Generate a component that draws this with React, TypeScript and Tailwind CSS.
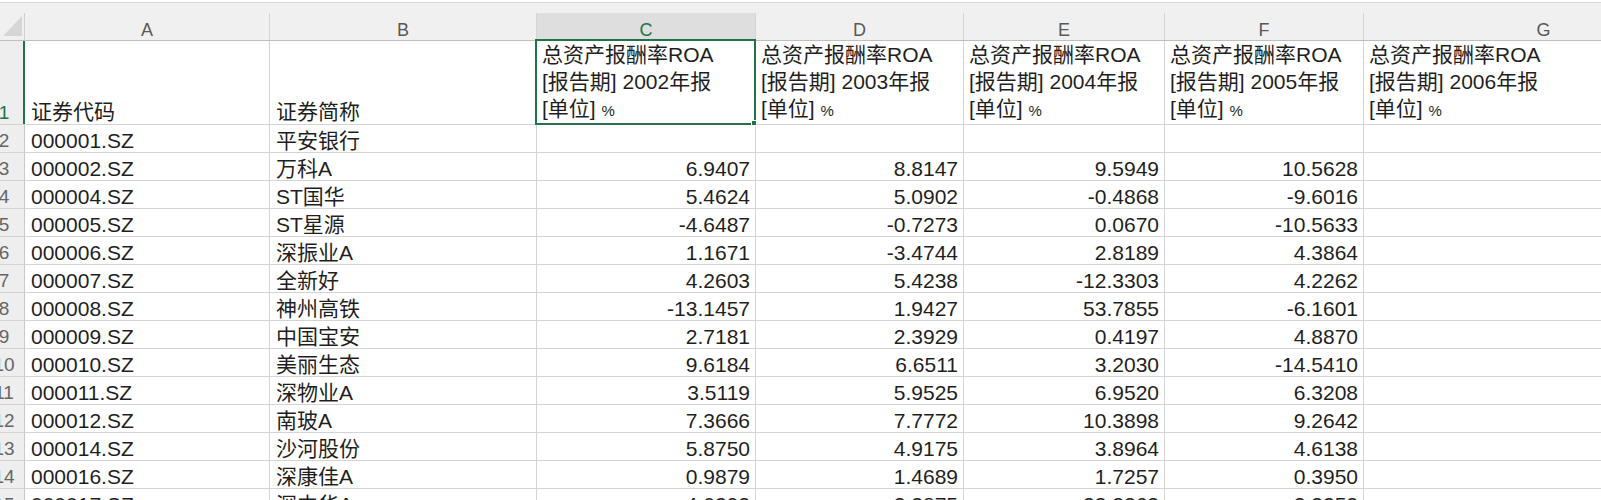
import React from "react";

const cols = [
  { key: "A", w: "w-[245px]" },
  { key: "B", w: "w-[267px]" },
  { key: "C", w: "w-[219px]" },
  { key: "D", w: "w-[208px]" },
  { key: "E", w: "w-[201px]" },
  { key: "F", w: "w-[199px]" },
  { key: "G", w: "w-[360px]" },
];

const years = ["2002", "2003", "2004", "2005", "2006"];

const rows: [string, string, string, string, string, string][] = [
  ["000001.SZ", "平安银行", "", "", "", ""],
  ["000002.SZ", "万科A", "6.9407", "8.8147", "9.5949", "10.5628"],
  ["000004.SZ", "ST国华", "5.4624", "5.0902", "-0.4868", "-9.6016"],
  ["000005.SZ", "ST星源", "-4.6487", "-0.7273", "0.0670", "-10.5633"],
  ["000006.SZ", "深振业A", "1.1671", "-3.4744", "2.8189", "4.3864"],
  ["000007.SZ", "全新好", "4.2603", "5.4238", "-12.3303", "4.2262"],
  ["000008.SZ", "神州高铁", "-13.1457", "1.9427", "53.7855", "-6.1601"],
  ["000009.SZ", "中国宝安", "2.7181", "2.3929", "0.4197", "4.8870"],
  ["000010.SZ", "美丽生态", "9.6184", "6.6511", "3.2030", "-14.5410"],
  ["000011.SZ", "深物业A", "3.5119", "5.9525", "6.9520", "6.3208"],
  ["000012.SZ", "南玻A", "7.3666", "7.7772", "10.3898", "9.2642"],
  ["000014.SZ", "沙河股份", "5.8750", "4.9175", "3.8964", "4.6138"],
  ["000016.SZ", "深康佳A", "0.9879", "1.4689", "1.7257", "0.3950"],
  ["000017.SZ", "深中华A", "4.0292", "2.2875", "23.2262", "2.3252"],
];

// row number column is scrolled a little, so wide numbers get clipped on the left
const RowHead = ({ n, active }: { n: number; active?: boolean }) => (
  <div
    className={`w-[25px] shrink-0 overflow-hidden flex items-end pb-[2px] bg-[#eeeeee] border-r ${
      active ? "border-r-2 border-[#217346] text-[#217346]" : "border-[#c8c8c8] text-[#666666]"
    }`}
  >
    <div className="w-[50px] -ml-[21px] shrink-0 text-center text-[19px] leading-none">{n}</div>
  </div>
);

export default function App() {
  return (
    <div className="w-[1601px] h-[500px] overflow-hidden bg-white font-['Liberation_Sans','Noto_Sans_CJK_SC',sans-serif] text-[#1f1f1f]">
      {/* toolbar edge */}
      <div className="h-[3px] bg-white border-b border-[#d9d9d9]" />
      <div className="h-[10px] bg-[#f0f0f0]" />

      {/* column headers */}
      <div className="flex h-[28px] bg-[#f0f0f0] border-b border-[#bfbfbf]">
        <div className="w-[25px] shrink-0 border-r border-[#d0d0d0] flex items-start pt-[3px] pl-[3px]">
          <svg width="19" height="20" viewBox="0 0 19 20">
            <polygon points="19,0 19,20 0,20" fill="#d6d6d6" />
          </svg>
        </div>
        {cols.map((c) => (
          <div
            key={c.key}
            className={`${c.w} shrink-0 border-r border-[#d4d4d4] flex items-end justify-center pb-[1px] text-[18px] leading-none ${
              c.key === "C" ? "bg-[#dedede] text-[#217346]" : "text-[#595959]"
            }`}
          >
            {c.key}
          </div>
        ))}
      </div>

      {/* row 1: titles */}
      <div className="flex h-[84px] border-b border-[#d4d4d4]">
        <RowHead n={1} active />
        <div className="w-[245px] shrink-0 border-r border-[#d4d4d4] flex items-end px-[6px] pb-[2px] text-[21px] leading-none">
          证券代码
        </div>
        <div className="w-[267px] shrink-0 border-r border-[#d4d4d4] flex items-end px-[6px] pb-[2px] text-[21px] leading-none">
          证券简称
        </div>
        {years.map((y, i) => (
          <div
            key={y}
            className={`${cols[i + 2].w} shrink-0 relative ${
              i < 4 ? "border-r border-[#d4d4d4]" : ""
            } flex flex-col justify-end px-[5px] text-[21px] leading-[27px] whitespace-nowrap`}
          >
            <div>总资产报酬率ROA</div>
            <div>[报告期] {y}年报</div>
            <div>
              [单位] <span className="text-[15px]">%</span>
            </div>
            {i === 0 && (
              <div className="absolute -left-[2px] -top-[2px] -right-[1px] -bottom-[1px] border-2 border-[#217346]">
                <div className="absolute -right-[3px] -bottom-[3px] w-[6px] h-[6px] bg-[#217346] border border-white" />
              </div>
            )}
          </div>
        ))}
      </div>

      {/* data rows */}
      {rows.map((r, idx) => (
        <div key={r[0]} className="flex h-[28px] border-b border-[#d4d4d4]">
          <RowHead n={idx + 2} />
          <div className="w-[245px] shrink-0 border-r border-[#d4d4d4] flex items-end px-[6px] pb-[1px] text-[21px] leading-none">
            {r[0]}
          </div>
          <div className="w-[267px] shrink-0 border-r border-[#d4d4d4] flex items-end px-[6px] pb-[1px] text-[21px] leading-none">
            {r[1]}
          </div>
          {[r[2], r[3], r[4], r[5]].map((v, j) => (
            <div
              key={j}
              className={`${cols[j + 2].w} shrink-0 border-r border-[#d4d4d4] flex items-end justify-end px-[5px] pb-[1px] text-[21px] leading-none`}
            >
              {v}
            </div>
          ))}
          <div className="w-[360px] shrink-0" />
        </div>
      ))}
    </div>
  );
}
